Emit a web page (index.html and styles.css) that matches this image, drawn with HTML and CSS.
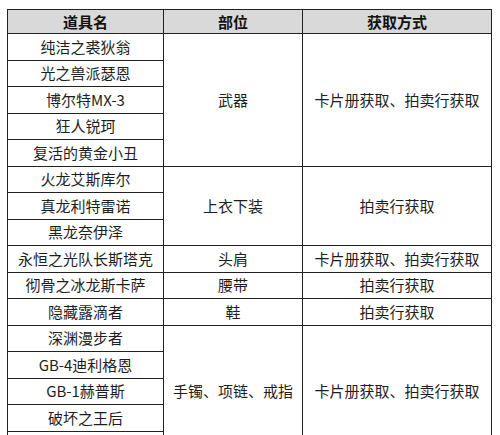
FILE: index.html
```html
<!DOCTYPE html>
<html lang="zh">
<head>
<meta charset="utf-8">
<link rel="stylesheet" href="styles.css">
</head>
<body>
<div class="wrap">
<table class="items">
  <colgroup>
    <col class="c-name">
    <col class="c-slot">
    <col class="c-way">
  </colgroup>
  <thead>
    <tr class="head"><th>道具名</th><th>部位</th><th>获取方式</th></tr>
  </thead>
  <tbody>
    <tr><td>纯洁之裘狄翁</td><td rowspan="5">武器</td><td rowspan="5">卡片册获取、拍卖行获取</td></tr>
    <tr><td>光之兽派瑟恩</td></tr>
    <tr><td>博尔特MX-3</td></tr>
    <tr><td>狂人锐珂</td></tr>
    <tr><td>复活的黄金小丑</td></tr>
    <tr><td>火龙艾斯库尔</td><td rowspan="3">上衣下装</td><td rowspan="3">拍卖行获取</td></tr>
    <tr><td>真龙利特雷诺</td></tr>
    <tr><td>黑龙奈伊泽</td></tr>
    <tr><td>永恒之光队长斯塔克</td><td>头肩</td><td>卡片册获取、拍卖行获取</td></tr>
    <tr><td>彻骨之冰龙斯卡萨</td><td>腰带</td><td>拍卖行获取</td></tr>
    <tr><td>隐藏露滴者</td><td>鞋</td><td>拍卖行获取</td></tr>
    <tr><td>深渊漫步者</td><td rowspan="5">手镯、项链、戒指</td><td rowspan="5">卡片册获取、拍卖行获取</td></tr>
    <tr><td>GB-4迪利格恩</td></tr>
    <tr><td>GB-1赫普斯</td></tr>
    <tr><td>破坏之王后</td></tr>
    <tr><td></td></tr>
  </tbody>
</table>
</div>
</body>
</html>
```

FILE: styles.css
```css
html, body {
  margin: 0;
  padding: 0;
  background: #ffffff;
}
.wrap {
  padding: 9px 0 0 7px;
}
.items {
  border-collapse: collapse;
  table-layout: fixed;
  width: 484px;
  font-family: "Noto Sans CJK SC", "Noto Sans", sans-serif;
  font-size: 15px;
  color: #1e1e1e;
}
.c-name { width: 156px; }
.c-slot { width: 139px; }
.c-way { width: 189px; }
.items th,
.items td {
  border: 1px solid #222;
  text-align: center;
  vertical-align: middle;
  padding: 0;
  line-height: 18px;
  white-space: nowrap;
}
.items th {
  height: 23px;
  background: #d9d9d9;
  font-weight: bold;
  color: #111;
}
.items td {
  height: 25.5px;
}
```
